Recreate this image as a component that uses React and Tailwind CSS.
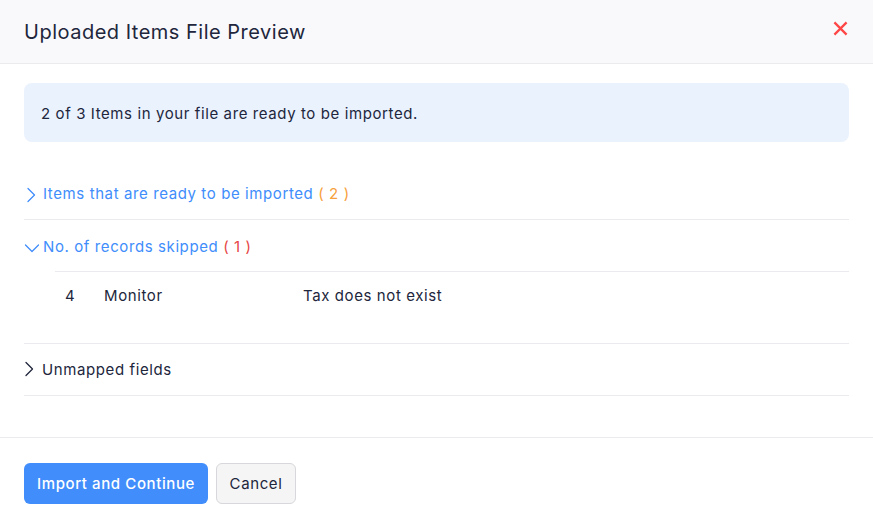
import React from 'react';

const font = { fontFamily: 'Inter, "Noto Sans", sans-serif' };

function ChevronRight() {
  return (
    <svg width="12" height="16" viewBox="0 0 12 16" fill="none" className="shrink-0">
      <path d="M3 1.5 L9.5 8 L3 14.5" stroke="currentColor" strokeWidth="1.3" strokeLinecap="round" strokeLinejoin="round" />
    </svg>
  );
}

function ChevronDown() {
  return (
    <svg width="16" height="12" viewBox="0 0 16 12" fill="none" className="shrink-0">
      <path d="M1.5 3 L8 9.5 L14.5 3" stroke="currentColor" strokeWidth="1.3" strokeLinecap="round" strokeLinejoin="round" />
    </svg>
  );
}

export default function App() {
  return (
    <div className="w-[873px] h-[523px] bg-white text-[#21263c] overflow-hidden flex flex-col tracking-[0.6px]" style={font}>
      {/* header */}
      <div className="h-[64px] shrink-0 bg-[#f9f9fb] border-b border-[#ebebef] px-6 flex items-center justify-between">
        <h1 className="text-[20px] font-normal text-[#21263c] pt-[1px] tracking-[0.5px]">Uploaded Items File Preview</h1>
        <button className="w-6 h-6 flex items-center justify-center text-[#ff4646] mr-[-3px] mb-[6px]">
          <svg width="15" height="15" viewBox="0 0 16 16" fill="none">
            <path d="M1.5 1.5 L14.5 14.5 M14.5 1.5 L1.5 14.5" stroke="currentColor" strokeWidth="2.4" />
          </svg>
        </button>
      </div>

      {/* body */}
      <div className="flex-1 px-6 pt-[19px] border-b border-[#ebebef]">
        <div className="h-[59px] rounded-lg bg-[#eaf2fe] px-[17px] pt-[3px] flex items-center text-[15px]">
          2 of 3 Items in your file are ready to be imported.
        </div>

        <div className="mt-[26px] h-[52px] pt-[2px] border-b border-[#ebebef] flex items-center gap-[6px] text-[15px] text-[#408dfb]">
          <span className="ml-[1px]"><ChevronRight /></span>
          <span>Items that are ready to be imported <span className="text-[#f7a03c]">( 2 )</span></span>
        </div>

        <div className="h-[51px] pt-[3px] flex items-center gap-[3px] text-[15px] text-[#408dfb]">
          <span className="mt-[1px]"><ChevronDown /></span>
          <span>No. of records skipped <span className="text-[#e64545]">( 1 )</span></span>
        </div>

        <div className="border-b border-[#ebebef] pb-[24px]">
          <div className="ml-[31px] border-t border-[#ebebef] h-[48px] pt-[2px] flex items-center text-[15px] text-[#21263c]">
            <div className="w-[49px] pl-[10px]">4</div>
            <div className="w-[199px]">Monitor</div>
            <div>Tax does not exist</div>
          </div>
        </div>

        <div className="h-[52px] pt-[2px] border-b border-[#ebebef] flex items-center gap-[7px] text-[15px] text-[#21263c]">
          <span className="ml-[-1px] mb-[3px]"><ChevronRight /></span>
          <span>Unmapped fields</span>
        </div>
      </div>

      {/* footer */}
      <div className="h-[85px] shrink-0 px-6 pt-[25px] flex items-start gap-[8px]">
        <button className="h-[41px] pt-[2px] rounded-md bg-[#408dfb] text-white text-[15px] font-medium w-[184px]">
          Import and Continue
        </button>
        <button className="h-[41px] pt-[2px] w-[80px] rounded-md bg-[#f5f5f5] border border-[#d7d7dc] text-[#21263c] text-[15px]">
          Cancel
        </button>
      </div>
    </div>
  );
}
